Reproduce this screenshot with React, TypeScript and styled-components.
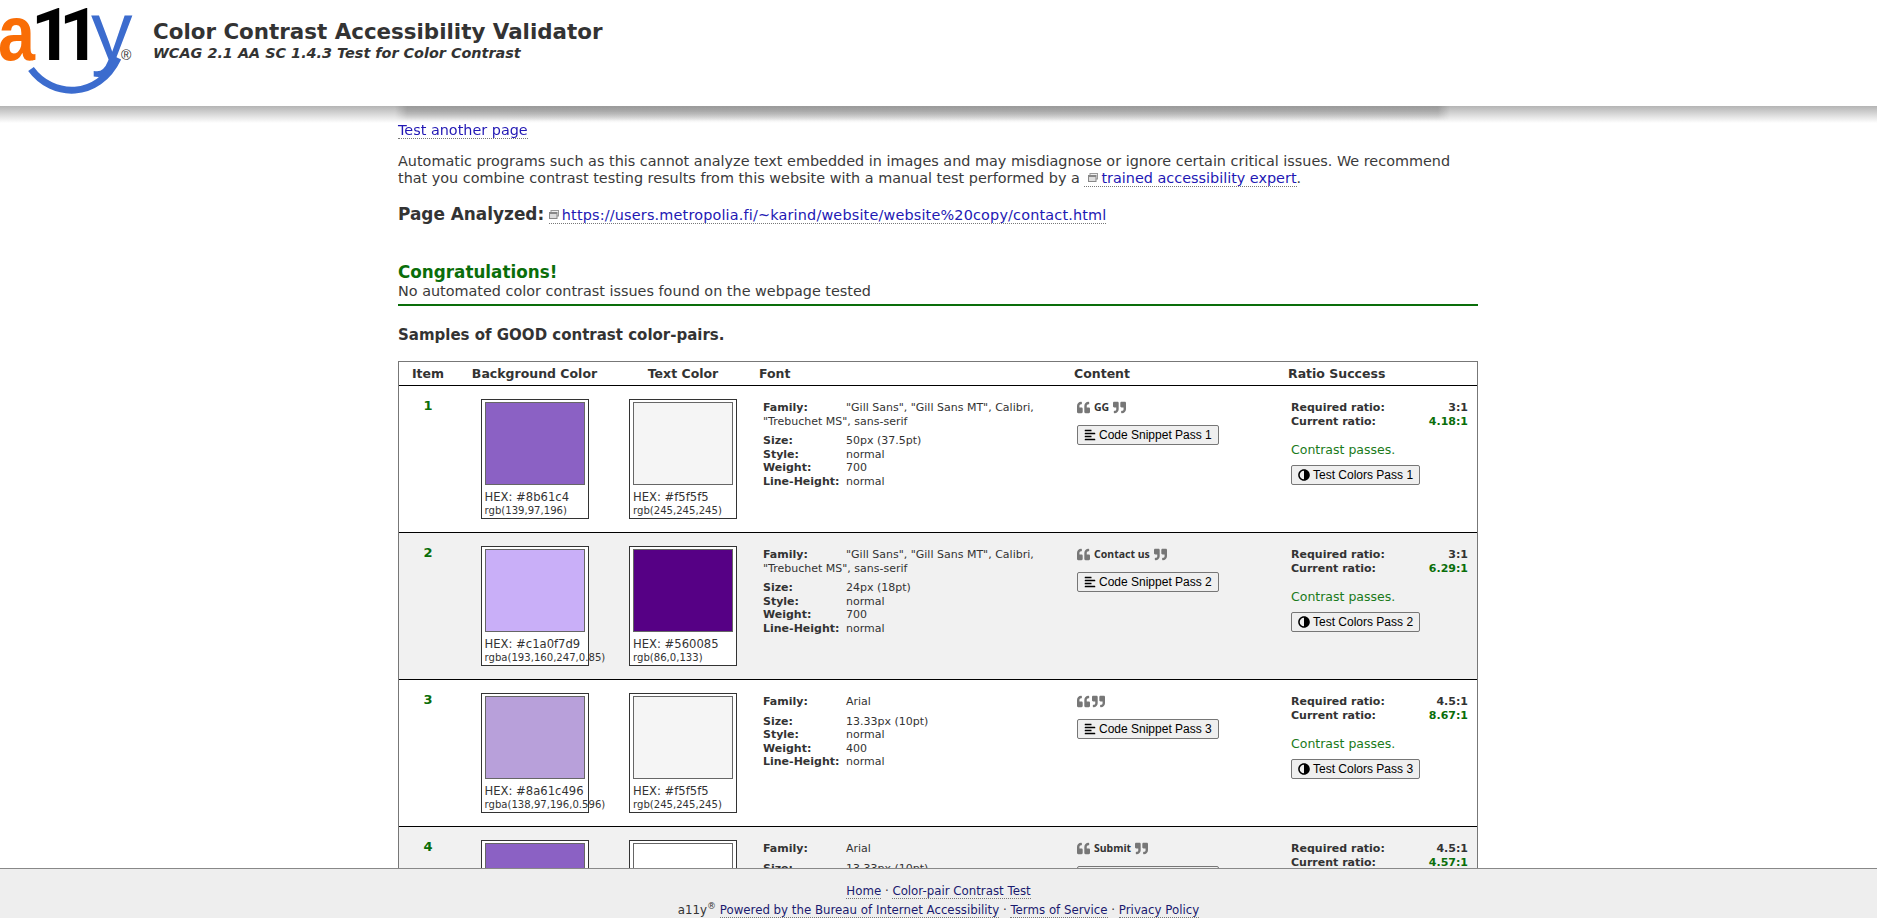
import React from 'react'
import styled, { createGlobalStyle } from 'styled-components'
import { FaAdjust, FaAlignLeft, FaQuoteLeft, FaQuoteRight } from 'react-icons/fa'

const samples = [
    {
        bg: '#8b61c4',
        bgHex: '#8b61c4',
        bgRgb: 'rgb(139,97,196)',
        fg: '#f5f5f5',
        fgRgb: 'rgb(245,245,245)',
        family: '"Gill Sans", "Gill Sans MT", Calibri, "Trebuchet MS", sans-serif',
        size: '50px (37.5pt)',
        weight: '700',
        content: 'GG',
        required: '3:1',
        current: '4.18:1',
    },
    {
        bg: '#c9aff8',
        bgHex: '#c1a0f7d9',
        bgRgb: 'rgba(193,160,247,0.85)',
        fg: '#560085',
        fgRgb: 'rgb(86,0,133)',
        family: '"Gill Sans", "Gill Sans MT", Calibri, "Trebuchet MS", sans-serif',
        size: '24px (18pt)',
        weight: '700',
        content: 'Contact us',
        required: '3:1',
        current: '6.29:1',
    },
    {
        bg: '#b8a0da',
        bgHex: '#8a61c496',
        bgRgb: 'rgba(138,97,196,0.596)',
        fg: '#f5f5f5',
        fgRgb: 'rgb(245,245,245)',
        family: 'Arial',
        size: '13.33px (10pt)',
        weight: '400',
        content: '',
        required: '4.5:1',
        current: '8.67:1',
    },
    {
        bg: '#8b61c4',
        bgHex: '#8b61c4',
        bgRgb: 'rgb(139,97,196)',
        fg: '#ffffff',
        fgRgb: 'rgb(255,255,255)',
        family: 'Arial',
        size: '13.33px (10pt)',
        weight: '400',
        content: 'Submit',
        required: '4.5:1',
        current: '4.57:1',
    },
]

const ExternalIcon = () => (
    <ExternalSvg viewBox="0 0 10 10" width="10" height="10">
        <rect x="2" y="0.5" width="7.5" height="5.5" fill="#eee" stroke="#999" />
        <rect x="0.5" y="2.5" width="7.5" height="6" fill="#ddd" stroke="#888" />
        <rect x="0.5" y="2.5" width="7.5" height="1.5" fill="#888" />
    </ExternalSvg>
)

const Logo = () => (
    <LogoSvg viewBox="0 0 150 106" width="150" height="106">
        <text
            x="-2"
            y="60"
            fontFamily="Liberation Sans"
            fontWeight="700"
            fontSize="78"
            fill="#f96d06"
            textLength="37"
            lengthAdjust="spacingAndGlyphs"
        >
            a
        </text>
        <text x="31 59" y="60" fontFamily="Roboto" fontWeight="700" fontSize="72" fill="#000">
            11
        </text>
        <text x="91" y="60" fontFamily="Liberation Sans" fontSize="83" fill="#3c6cce">
            y
        </text>
        <path d="M31 69 C 52 98, 98 100, 118 58" fill="none" stroke="#3c6cce" strokeWidth="7" />
        <text x="121" y="60" fontFamily="Liberation Sans" fontSize="14" fill="#333">
            ®
        </text>
    </LogoSvg>
)

const App = () => {
    return (
        <>
            <GlobalStyle />
            <Header>
                <Logo />
                <Titles>
                    <Title>Color Contrast Accessibility Validator</Title>
                    <Subtitle>WCAG 2.1 AA SC 1.4.3 Test for Color Contrast</Subtitle>
                </Titles>
            </Header>
            <Main>
                <TestAnother>
                    <Link href="#">Test another page</Link>
                </TestAnother>
                <Intro>
                    Automatic programs such as this cannot analyze text embedded in images and may
                    misdiagnose or ignore certain critical issues. We recommend that you combine
                    contrast testing results from this website with a manual test performed by a{' '}
                    <Link href="#">
                        <ExternalIcon />
                        trained accessibility expert
                    </Link>
                    .
                </Intro>
                <Analyzed>
                    <strong>Page Analyzed:</strong>{' '}
                    <UrlLink href="#">
                        <ExternalIcon />
                        https://users.metropolia.fi/~karind/website/website%20copy/contact.html
                    </UrlLink>
                </Analyzed>
                <Congrats>Congratulations!</Congrats>
                <NoIssues>No automated color contrast issues found on the webpage tested</NoIssues>
                <Samples>Samples of GOOD contrast color-pairs.</Samples>
                <Table>
                    <HeadRow>
                        <HeadCell $center>Item</HeadCell>
                        <HeadCell $center>Background Color</HeadCell>
                        <HeadCell $center>Text Color</HeadCell>
                        <HeadCell>Font</HeadCell>
                        <HeadCell>Content</HeadCell>
                        <HeadCell>Ratio Success</HeadCell>
                    </HeadRow>
                    {samples.map((s, i) => (
                        <Row key={i} $even={i % 2 === 1}>
                            <ItemNumber>{i + 1}</ItemNumber>
                            <SwatchCell>
                                <SwatchCard>
                                    <Swatch $color={s.bg} />
                                    <Hex>HEX: {s.bgHex}</Hex>
                                    <Rgb>{s.bgRgb}</Rgb>
                                </SwatchCard>
                            </SwatchCell>
                            <SwatchCell>
                                <SwatchCard>
                                    <Swatch $color={s.fg} />
                                    <Hex>HEX: {s.fg}</Hex>
                                    <Rgb>{s.fgRgb}</Rgb>
                                </SwatchCard>
                            </SwatchCell>
                            <FontCell>
                                <FamilyLine>
                                    <FontLabel>Family:</FontLabel>
                                    {s.family}
                                </FamilyLine>
                                <FontLine>
                                    <FontLabel>Size:</FontLabel>
                                    {s.size}
                                </FontLine>
                                <FontLine>
                                    <FontLabel>Style:</FontLabel>normal
                                </FontLine>
                                <FontLine>
                                    <FontLabel>Weight:</FontLabel>
                                    {s.weight}
                                </FontLine>
                                <FontLine>
                                    <FontLabel>Line-Height:</FontLabel>normal
                                </FontLine>
                            </FontCell>
                            <ContentCell>
                                <Quoted>
                                    <FaQuoteLeft size={13} color="#777" />
                                    {s.content && <QuotedText>{s.content}</QuotedText>}
                                    <FaQuoteRight size={13} color="#777" />
                                </Quoted>
                                <ActionButton>
                                    <FaAlignLeft size={12} />
                                    Code Snippet Pass {i + 1}
                                </ActionButton>
                            </ContentCell>
                            <RatioCell>
                                <RatioLine>
                                    <span>Required ratio:</span>
                                    <span>{s.required}</span>
                                </RatioLine>
                                <RatioLine>
                                    <span>Current ratio:</span>
                                    <CurrentValue>{s.current}</CurrentValue>
                                </RatioLine>
                                <Passes>Contrast passes.</Passes>
                                <ActionButton>
                                    <ContrastIcon size={12} />
                                    Test Colors Pass {i + 1}
                                </ActionButton>
                            </RatioCell>
                        </Row>
                    ))}
                </Table>
            </Main>
            <Footer>
                <FooterLine>
                    <FooterLink href="#">Home</FooterLink> · <FooterLink href="#">Color-pair Contrast Test</FooterLink>
                </FooterLine>
                <FooterLine>
                    a11y<Sup>®</Sup> <FooterLink href="#">Powered by the Bureau of Internet Accessibility</FooterLink> ·{' '}
                    <FooterLink href="#">Terms of Service</FooterLink> · <FooterLink href="#">Privacy Policy</FooterLink>
                </FooterLine>
            </Footer>
        </>
    )
}

export default App

const GlobalStyle = createGlobalStyle`
    html, body {
        margin: 0;
        height: 100%;
        overflow: hidden;
        background: #fff;
        color: #333;
        font-family: "DejaVu Sans", Verdana, sans-serif;
    }
`

const Header = styled.header`
    position: fixed;
    top: 0;
    left: 0;
    right: 0;
    height: 106px;
    background: #fff;
    display: flex;
    z-index: 2;
    &::after {
        content: '';
        position: absolute;
        top: 100%;
        left: 0;
        right: 0;
        height: 17px;
        background: linear-gradient(#b4b4b4, #fff);
    }
    &::before {
        content: '';
        position: absolute;
        top: 100%;
        left: 395px;
        width: 1055px;
        height: 15px;
        z-index: 1;
        background: linear-gradient(#9a9a9a, rgba(255, 255, 255, 0));
        mask-image: linear-gradient(to right, transparent, #000 12px, #000 calc(100% - 12px), transparent);
    }
`

const LogoSvg = styled.svg`
    display: block;
    flex: none;
`

const Titles = styled.div`
    padding: 19px 0 0 3px;
`

const Title = styled.h1`
    margin: 0;
    font-size: 21.4px;
    line-height: 26px;
    font-weight: 700;
    color: #333;
`

const Subtitle = styled.div`
    font-size: 14.4px;
    line-height: 17px;
    font-weight: 700;
    font-style: italic;
    color: #333;
`

const Main = styled.main`
    box-sizing: border-box;
    width: 1081px;
    margin: 0 auto;
    padding: 121px 1px 0 0;
    font-size: 14.4px;
    color: #3a3a3a;
`

const Link = styled.a`
    color: #2218b4;
    text-decoration: none;
    border-bottom: 1px dotted #777;
`

const UrlLink = styled(Link)`
    letter-spacing: 0.18px;
`

const ExternalSvg = styled.svg`
    margin-right: 3px;
`

const TestAnother = styled.div`
    position: relative;
    z-index: 3;
    line-height: 18px;
`

const Intro = styled.p`
    margin: 14px 0 0;
    line-height: 17px;
    ${Link} {
        padding-left: 4px;
    }
`

const Analyzed = styled.div`
    margin-top: 17px;
    line-height: 21px;
    strong {
        font-size: 16.9px;
        color: #333;
    }
`

const Congrats = styled.div`
    margin-top: 35px;
    font-size: 16.8px;
    line-height: 22px;
    font-weight: 700;
    color: #0a6e0a;
`

const NoIssues = styled.div`
    line-height: 17px;
    padding-bottom: 4px;
    border-bottom: 2px solid #0a6e0a;
`

const Samples = styled.div`
    margin-top: 20px;
    font-size: 15px;
    font-weight: 700;
    line-height: 18px;
    color: #333;
`

const Table = styled.div`
    margin-top: 17px;
    border: 1px solid #777;
    border-bottom: 0;
    color: #333;
`

const columns = '58px 155px 142px 315px 214px 194px'

const HeadRow = styled.div`
    display: grid;
    grid-template-columns: ${columns};
    height: 23px;
    align-items: center;
    border-bottom: 1px solid #000;
`

const HeadCell = styled.div<{ $center?: boolean }>`
    font-size: 12.5px;
    font-weight: 700;
    text-align: ${(p) => (p.$center ? 'center' : 'left')};
    padding-left: ${(p) => (p.$center ? '0' : '5px')};
    white-space: nowrap;
`

const Row = styled.div<{ $even: boolean }>`
    display: grid;
    grid-template-columns: ${columns};
    height: 146px;
    box-sizing: content-box;
    border-bottom: 1px solid #000;
    background: ${(p) => (p.$even ? '#f1f1f1' : '#fff')};
`

const ItemNumber = styled.div`
    padding-top: 12px;
    text-align: center;
    font-size: 13px;
    line-height: 16px;
    font-weight: 700;
    color: #0a6e0a;
`

const SwatchCell = styled.div`
    padding-top: 13px;
    display: flex;
    justify-content: center;
`

const SwatchCard = styled.div`
    box-sizing: border-box;
    width: 108px;
    height: 120px;
    border: 1px solid #333;
    background: #fff;
    padding: 2px 3px;
    white-space: nowrap;
`

const Swatch = styled.div<{ $color: string }>`
    box-sizing: border-box;
    width: 100px;
    height: 83px;
    border: 1px solid #666;
    background: ${(p) => p.$color};
`

const Hex = styled.div`
    margin-top: 6px;
    font-size: 11.6px;
    line-height: 13px;
`

const Rgb = styled.div`
    font-size: 10.1px;
    line-height: 13px;
`

const FontCell = styled.div`
    padding: 15px 10px 0 9px;
    font-size: 11px;
    line-height: 13.5px;
`

const FontLabel = styled.b`
    display: inline-block;
    width: 83px;
`

const FamilyLine = styled.div`
    margin-bottom: 6px;
`

const FontLine = styled.div``

const ContentCell = styled.div`
    padding: 13px 0 0 8px;
`

const Quoted = styled.div`
    display: flex;
    align-items: center;
    gap: 2px;
    height: 16px;
`

const QuotedText = styled.span`
    margin: 0 2px;
    font-family: "Noto Sans", sans-serif;
    font-size: 10.5px;
    font-weight: 700;
`

const ActionButton = styled.button`
    display: flex;
    align-items: center;
    gap: 3px;
    margin-top: 10px;
    height: 20px;
    padding: 0 6px;
    font-family: "Liberation Sans", Arial, sans-serif;
    font-size: 12px;
    color: #000;
    background: #efefef;
    border: 1px solid #767676;
    border-radius: 2px;
    white-space: nowrap;
`

const ContrastIcon = styled(FaAdjust)`
    transform: scaleX(-1);
`

const RatioCell = styled.div`
    padding: 15px 9px 0 8px;
    font-size: 11px;
    line-height: 13.5px;
    ${ActionButton} {
        margin-top: 7px;
    }
`

const RatioLine = styled.div`
    display: flex;
    justify-content: space-between;
    font-weight: 700;
`

const CurrentValue = styled.span`
    color: #0a6e0a;
`

const Passes = styled.div`
    margin-top: 13px;
    font-size: 12.5px;
    line-height: 17px;
    color: #1a7a1a;
`

const Footer = styled.footer`
    box-sizing: border-box;
    position: fixed;
    left: 0;
    right: 0;
    bottom: 0;
    height: 50px;
    border-top: 1px solid #888;
    background: #eee;
    font-size: 11.8px;
    text-align: center;
    padding-top: 13px;
    z-index: 2;
`

const FooterLine = styled.div`
    line-height: 19px;
    white-space: nowrap;
`

const FooterLink = styled.a`
    color: #1a1a6e;
    text-decoration: none;
    border-bottom: 1px dotted #777;
`

const Sup = styled.sup`
    font-size: 9px;
    line-height: 0;
`
